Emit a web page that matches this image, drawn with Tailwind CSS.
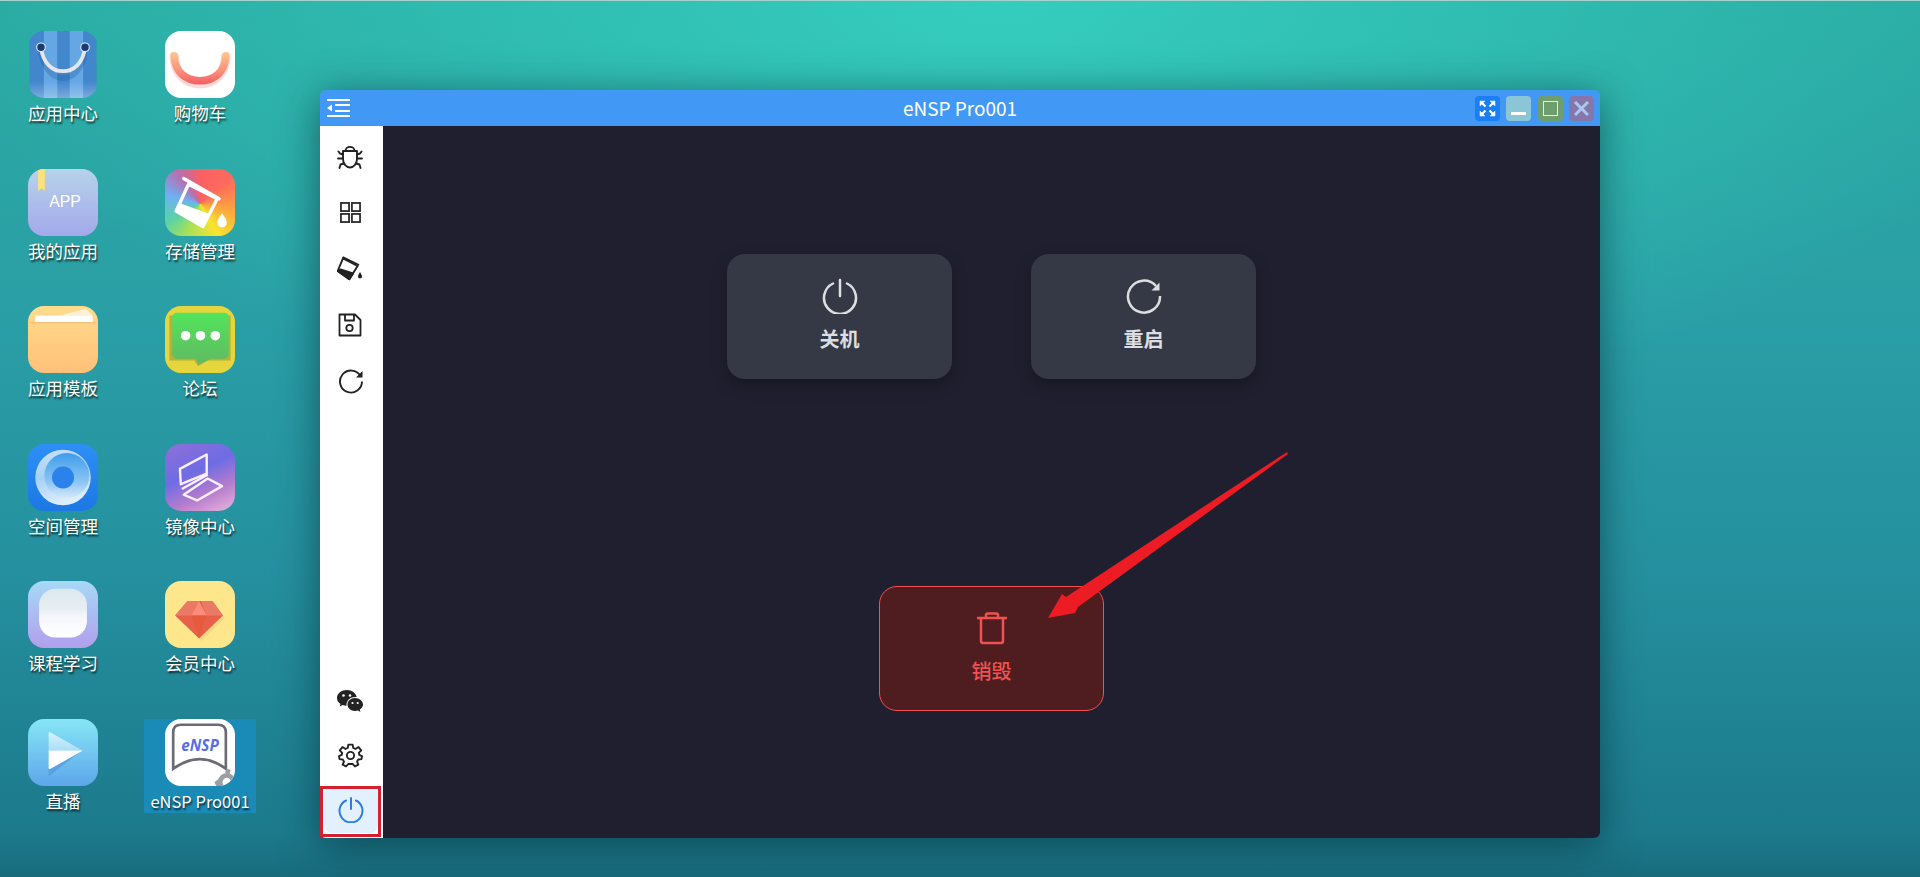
<!DOCTYPE html>
<html lang="zh-CN">
<head>
  <meta charset="UTF-8" />
  <meta name="viewport" content="width=device-width, initial-scale=1" />
  <title>eNSP Pro001</title>
  <script src="https://cdn.jsdelivr.net/npm/@tailwindcss/browser@4"></script>
</head>
<body class="font-['Noto_Sans_CJK_SC','Noto_Sans',sans-serif]">
  <div class="relative w-[1920px] h-[877px] overflow-hidden border-t border-[#a5d3cc] bg-[radial-gradient(ellipse_1050px_440px_at_52%_0%,#35cdbe_0%,rgba(53,205,190,0)_100%),linear-gradient(180deg,#2aaba2_0%,#2a9fa6_35%,#25909f_65%,#1c7a8c_95%,#186c7c_100%)]">

    <!-- desktop icons -->
    <div class="grid grid-cols-[112px_112px] gap-x-[25px] gap-y-[43.5px] pt-[30px] pl-[7px] w-fit text-white text-[17.5px] leading-[24px] [text-shadow:1px_2px_2px_rgba(0,0,0,.75)]">

      <div class="flex flex-col items-center h-[94px]">
        <div class="w-[70px] h-[70px] rounded-[16px] overflow-hidden">
          <svg viewBox="0 0 70 70" class="w-full h-full">
            <defs><linearGradient id="fadeA" x1="0" y1="0" x2="0" y2="1"><stop offset=".75" stop-color="#fff" stop-opacity="0"/><stop offset="1" stop-color="#fff" stop-opacity=".3"/></linearGradient></defs>
            <rect width="70" height="70" fill="#4286cc"/>
            <rect x="15" width="14" height="70" fill="#64a7e4"/><rect x="42" width="14" height="70" fill="#64a7e4"/>
            <rect width="70" height="70" fill="url(#fadeA)"/>
            <path d="M12 22C15 40 25 49 35 49S55 40 58 22" fill="none" stroke="#1f5c9e" stroke-opacity=".3" stroke-width="6"/>
            <path d="M12 17C14 34 24 42 35 42S56 34 58 17" fill="none" stroke="#e6e6ea" stroke-width="4"/>
            <circle cx="12" cy="17" r="4.500" fill="#1b3a72" stroke="#dfe8f2" stroke-width="1.200"/><circle cx="58" cy="17" r="4.500" fill="#1b3a72" stroke="#dfe8f2" stroke-width="1.200"/>
          </svg>
        </div>
        <span class="mt-[3px]">应用中心</span>
      </div>

      <div class="flex flex-col items-center h-[94px]">
        <div class="w-[70px] h-[70px] rounded-[16px] overflow-hidden bg-white">
          <svg viewBox="0 0 70 70" class="w-full h-full">
            <defs><linearGradient id="smile" gradientUnits="userSpaceOnUse" x1="0" y1="22" x2="0" y2="58"><stop offset="0" stop-color="#fdc88f"/><stop offset=".6" stop-color="#f98a78"/><stop offset="1" stop-color="#f4555f"/></linearGradient></defs>
            <path d="M8 27C9 45 20 55 35 55S61 45 62 27" fill="none" stroke="#f9b6b4" stroke-opacity=".5" stroke-width="10" stroke-linecap="round"/>
            <path d="M8 26C9 43 20 52 35 52S61 43 62 26" fill="none" stroke="url(#smile)" stroke-width="8" stroke-linecap="round"/>
          </svg>
        </div>
        <span class="mt-[3px]">购物车</span>
      </div>

      <div class="flex flex-col items-center h-[94px]">
        <div class="w-[70px] h-[70px] rounded-[16px] overflow-hidden bg-[linear-gradient(180deg,#b7d3ea,#a3a9ea)]">
          <svg viewBox="0 0 70 70" class="w-full h-full">
            <path d="M9 0H16V23L12.500 20L9 23Z" fill="#fde27a"/>
            <text x="37" y="40" text-anchor="middle" fill="#fff" font-size="16.500" style="font-family:'Liberation Sans',sans-serif;text-shadow:none">APP</text>
          </svg>
        </div>
        <span class="mt-[3px]">我的应用</span>
      </div>

      <div class="flex flex-col items-center h-[94px]">
        <div class="w-[70px] h-[70px] rounded-[16px] overflow-hidden bg-[conic-gradient(from_0deg_at_50%_52%,#fb5f64_0deg,#fd6a5c_50deg,#fda33f_100deg,#f7e42f_150deg,#a7e05a_205deg,#5cd2a5_240deg,#6eb0f4_285deg,#b66fb0_325deg,#fb5f64_360deg)]">
          <svg viewBox="0 0 70 70" class="w-full h-full">
            <path d="M18 10L55 31" stroke="#fff" stroke-width="3.500" stroke-linecap="round"/>
            <path d="M23 16L53 31L38 60L10 44Z" fill="none" stroke="#fff" stroke-width="3.500" stroke-linejoin="round"/>
            <path d="M15 36L45 47L38 60L10 44Z" fill="#fff"/>
            <path d="M58 46C61 51 63 53 63 56A5 5 0 0 1 53 56C53 53 55 51 58 46Z" fill="#fff"/>
          </svg>
        </div>
        <span class="mt-[3px]">存储管理</span>
      </div>

      <div class="flex flex-col items-center h-[94px]">
        <div class="w-[70px] h-[70px] rounded-[16px] overflow-hidden bg-[linear-gradient(180deg,#ffdc8c,#ffc07a)]">
          <svg viewBox="0 0 70 70" class="w-full h-full">
            <path d="M32 10L59 3L66 10Z" fill="#fdf1d8"/>
            <rect x="6" y="10" width="60" height="7" fill="#fff"/>
            <rect y="17" width="70" height="1" fill="#eeb868"/>
          </svg>
        </div>
        <span class="mt-[3px]">应用模板</span>
      </div>

      <div class="flex flex-col items-center h-[94px]">
        <div class="w-[70px] h-[70px] rounded-[16px] overflow-hidden bg-[#e4d63c]">
          <svg viewBox="0 0 70 70" class="w-full h-full">
            <defs><linearGradient id="chat" x1="0" y1="0" x2="0" y2="1"><stop offset="0" stop-color="#52e55c"/><stop offset="1" stop-color="#60ba62"/></linearGradient></defs>
            <path d="M3 10V57H29L33 63L43 57H67V10Z" fill="#a9a73a" opacity=".8"/>
            <path d="M6 12Q6 7 11 7H60Q65 7 65 12V50Q65 55 60 55H47L33 61L31 55H11Q6 55 6 50Z" fill="url(#chat)"/>
            <circle cx="20" cy="31" r="5" fill="#fff"/><circle cx="35.500" cy="31" r="5" fill="#fff"/><circle cx="51" cy="31" r="5" fill="#fff"/>
          </svg>
        </div>
        <span class="mt-[3px]">论坛</span>
      </div>

      <div class="flex flex-col items-center h-[94px]">
        <div class="w-[70px] h-[70px] rounded-[16px] overflow-hidden bg-[linear-gradient(180deg,#2e8ff7,#1c78e2)]">
          <svg viewBox="0 0 70 70" class="w-full h-full">
            <defs>
              <linearGradient id="disc" x1="0" y1="0" x2=".3" y2="1"><stop offset="0" stop-color="#cfe3fa"/><stop offset=".5" stop-color="#a5d0f7"/><stop offset="1" stop-color="#dcedfb"/></linearGradient>
              <linearGradient id="swirl" x1="0" y1="0" x2="0" y2="1"><stop offset="0" stop-color="#3f9ceb"/><stop offset=".65" stop-color="#8cc6f5"/><stop offset="1" stop-color="#d6e9fa"/></linearGradient>
            </defs>
            <circle cx="35" cy="35" r="29" fill="url(#disc)"/>
            <circle cx="39" cy="33" r="23.500" fill="url(#swirl)"/>
            <circle cx="35" cy="35" r="11.500" fill="#2a82ea"/>
          </svg>
        </div>
        <span class="mt-[3px]">空间管理</span>
      </div>

      <div class="flex flex-col items-center h-[94px]">
        <div class="w-[70px] h-[70px] rounded-[16px] overflow-hidden bg-[linear-gradient(155deg,#8f6fd8_0%,#6e6ce4_42%,#b57ccc_70%,#d9a2d8_90%,#bfc0cc_100%)]">
          <svg viewBox="0 0 70 70" class="w-full h-full" fill="none" stroke="#fbeffb" stroke-width="2.500" stroke-linejoin="round">
            <path d="M14 26L42 11V31L15 42Z"/>
            <path d="M16 47L43 32"/>
            <path d="M18 53L43 36L58 44L32 59Z"/>
          </svg>
        </div>
        <span class="mt-[3px]">镜像中心</span>
      </div>

      <div class="flex flex-col items-center h-[94px]">
        <div class="w-[70px] h-[70px] rounded-[16px] overflow-hidden bg-[linear-gradient(180deg,#a6d9f6,#b19fec)]">
          <svg viewBox="0 0 70 70" class="w-full h-full">
            <defs><linearGradient id="slate" x1="0" y1="0" x2="0" y2="1"><stop offset="0" stop-color="#dce8ee"/><stop offset=".4" stop-color="#e6eef3"/><stop offset=".6" stop-color="#f6f7fd"/><stop offset="1" stop-color="#fff"/></linearGradient></defs>
            <rect x="10" y="8" width="50" height="51" rx="17" fill="url(#slate)"/>
          </svg>
        </div>
        <span class="mt-[3px]">课程学习</span>
      </div>

      <div class="flex flex-col items-center h-[94px]">
        <div class="w-[70px] h-[70px] rounded-[16px] overflow-hidden bg-[#fee68c]">
          <svg viewBox="0 0 70 70" class="w-full h-full">
            <path d="M24 24H50L61 39L36 63Z" fill="#e0c068" opacity=".35"/>
            <path d="M22 21H48L59 36L34 60L9 36Z" fill="#e8604a"/>
            <path d="M22 21L34 21L26 36H9Z" fill="#ea7a66"/><path d="M48 21L36 21L42 36H59Z" fill="#ea7a66"/>
            <path d="M34 21L42 36H26Z" fill="#fb8c78"/>
            <path d="M26 36H42L34 60Z" fill="#e65a3e"/>
          </svg>
        </div>
        <span class="mt-[3px]">会员中心</span>
      </div>

      <div class="flex flex-col items-center h-[94px]">
        <div class="w-[70px] h-[70px] rounded-[16px] overflow-hidden bg-[linear-gradient(180deg,#87e6f6,#5da6ea)]">
          <svg viewBox="0 0 70 70" class="w-full h-full">
            <defs><linearGradient id="playTop" x1="0" y1="0" x2="0" y2="1"><stop offset="0" stop-color="#d5f2fb"/><stop offset="1" stop-color="#a9def6"/></linearGradient></defs>
            <path d="M20 52L55 33L20 60Z" fill="#4a90dc" opacity=".5"/>
            <path d="M20 15Q20 13 22 14L54 32Q56 33 55 33H20Z" fill="url(#playTop)"/>
            <path d="M20 33H55Q56 33 54 34L22 52Q20 53 20 51Z" fill="#fff"/>
          </svg>
        </div>
        <span class="mt-[3px]">直播</span>
      </div>

      <div class="flex flex-col items-center h-[94px] bg-[#1a8ab6]">
        <div class="w-[70px] h-[70px] rounded-[16px] overflow-hidden bg-white">
          <svg viewBox="0 0 70 70" class="w-full h-full">
            <path d="M7 52V14Q7 6 15 6H54Q62 6 62 14V52Q35 32 7 52Z" fill="none" stroke="#6b6b75" stroke-width="2.800"/>
            <text x="35" y="33" text-anchor="middle" fill="#5a6ce2" font-size="16" font-weight="700" font-style="italic" style="font-family:'Open Sans',sans-serif;text-shadow:none">eNSP</text>
            <circle cx="63" cy="66" r="7" fill="none" stroke="#9a9fa6" stroke-width="5"/>
            <path d="M54 63L50 66L52 70H58ZM61 56L63 52L67 53L66 58Z" fill="#9a9fa6"/>
          </svg>
        </div>
        <span class="mt-[3px] text-[16.500px] whitespace-nowrap">eNSP Pro001</span>
      </div>
    </div>

    <!-- app window -->
    <div class="absolute left-[320px] top-[89px] w-[1280px] h-[748px] flex flex-col rounded-[6px] overflow-hidden shadow-[0_6px_40px_rgba(0,30,40,.55)]">
      <div class="relative h-[36px] shrink-0 flex items-center justify-between bg-[#4298f5] pl-[7px] pr-[6px]">
        <svg viewBox="0 0 23 18" class="w-[23px] h-[18px]" fill="#fff">
          <rect y="0" width="23" height="2"/><rect x="8" y="5" width="15" height="2"/><rect x="8" y="11" width="15" height="2"/><rect y="16" width="23" height="2"/>
          <path d="M0 9L5 5.500V12.500Z"/>
        </svg>
        <span class="absolute left-0 right-0 text-center text-white text-[19px]">eNSP Pro001</span>
        <div class="relative flex gap-[6.300px]">
          <div class="w-[25px] h-[25px] rounded-[4px] bg-[#1a7ff5] flex items-center justify-center">
            <svg viewBox="0 0 17 17" class="w-[17px] h-[17px]" fill="#fff" stroke="#fff">
              <path d="M1 1H6L1 6Z" stroke-width=".5"/><path d="M16 1H11L16 6Z" stroke-width=".5"/><path d="M1 16H6L1 11Z" stroke-width=".5"/><path d="M16 16H11L16 11Z" stroke-width=".5"/>
              <path d="M3 3L6.500 6.500M14 3L10.500 6.500M3 14L6.500 10.500M14 14L10.500 10.500" stroke-width="2" fill="none"/>
            </svg>
          </div>
          <div class="w-[25px] h-[25px] rounded-[4px] bg-[#8ac5d8] flex items-center justify-center">
            <div class="w-[15px] h-[3px] bg-white mt-[10px]"></div>
          </div>
          <div class="w-[25px] h-[25px] rounded-[4px] bg-[#6e9e6e] flex items-center justify-center">
            <div class="w-[15px] h-[15px] border-[1.500px] border-[#e4ecdf]"></div>
          </div>
          <div class="w-[25px] h-[25px] rounded-[4px] bg-[#8577ab] flex items-center justify-center">
            <svg viewBox="0 0 17 17" class="w-[17px] h-[17px]" fill="none" stroke="#a9c8ee" stroke-width="3"><path d="M2 2L15 15M15 2L2 15"/></svg>
          </div>
        </div>
      </div>

      <div class="flex flex-1 min-h-0">
        <!-- side toolbar -->
        <div class="w-[63px] shrink-0 bg-white flex flex-col justify-between pt-[3px] pb-[3px] pr-[3px] text-[#222]">
          <div class="flex flex-col">
            <div class="h-[56px] flex items-center justify-center">
              <svg viewBox="0 0 26 26" class="w-[26px] h-[26px] -mt-[2px]" fill="none" stroke="currentColor" stroke-width="1.900" stroke-linecap="round" stroke-linejoin="round">
                <path d="M8.500 8C8.500 2.500 17.500 2.500 17.500 8"/><path d="M6 8H20V16C20 21 16.500 24.500 13 24.500S6 21 6 16Z"/>
                <path d="M6 11.500L3 10.500L1.500 8.500M20 11.500L23 10.500L24.500 8.500M6 15.500H1M20 15.500H25M7 20.500L3.500 21.500L2.500 25M19 20.500L22.500 21.500L23.500 25"/>
              </svg>
            </div>
            <div class="h-[56px] flex items-center justify-center">
              <svg viewBox="0 0 22 22" class="w-[21px] h-[21px] -mt-[2px]" fill="none" stroke="currentColor" stroke-width="1.800">
                <rect x="1" y="1" width="8.500" height="8.500"/><rect x="12.500" y="1" width="8.500" height="8.500"/><rect x="1" y="12.500" width="8.500" height="8.500"/><rect x="12.500" y="12.500" width="8.500" height="8.500"/>
              </svg>
            </div>
            <div class="h-[56px] flex items-center justify-center">
              <svg viewBox="0 0 26 26" class="w-[26px] h-[26px] -mt-[3px]" fill="none" stroke="currentColor" stroke-width="1.900" stroke-linejoin="round">
                <path d="M5.700 2L22 10"/><path d="M6 3.300L20.600 11L12.300 24.300L.7 16Z"/>
                <path d="M3.500 14.500L16 18.500L12.300 24.300L.7 16Z" fill="currentColor"/>
                <path d="M23 17C24 19 25 20 25 21.500A2 2 0 0 1 21 21.500C21 20 22 19 23 17Z" fill="currentColor" stroke="none"/>
              </svg>
            </div>
            <div class="h-[56px] flex items-center justify-center">
              <svg viewBox="0 0 24 24" class="w-[24px] h-[24px]" fill="none" stroke="currentColor" stroke-width="1.800" stroke-linejoin="round">
                <path d="M1.500 1.500H17L22.500 7V22.500H1.500Z"/><path d="M7 1.500V7.500H16V1.500"/><circle cx="11.500" cy="15" r="3.200"/>
              </svg>
            </div>
            <div class="h-[56px] flex items-center justify-center">
              <svg viewBox="0 0 26 26" class="w-[26px] h-[26px] ml-[2px]" fill="none" stroke="currentColor" stroke-width="1.900">
                <path d="M22.500 8A11 11 0 1 0 24 13.500"/>
                <path d="M24.500 3V9.500H18Z" fill="currentColor" stroke="none"/>
              </svg>
            </div>
          </div>
          <div class="flex flex-col">
            <div class="h-[55px] flex items-center justify-center">
              <svg viewBox="0 0 26 22" class="w-[26px] h-[22px]" fill="currentColor">
                <path d="M10 0C4.500 0 0 3.500 0 8C0 10.500 1.300 12.500 3.500 14L2.700 16.500L5.700 15C7 15.500 8.300 15.700 9.500 15.700C9 10 14 6.500 19.700 7C18.800 3 14.800 0 10 0Z"/>
                <path d="M18 8C13.500 8 10.500 11 10.500 14.500S13.500 21 18 21C19 21 20 20.700 21 20.500L23.500 22L22.800 19.500C24.700 18.300 26 16.500 26 14.500C26 11 22.500 8 18 8Z"/>
                <circle cx="6.500" cy="5.500" r="1.300" fill="#fff"/><circle cx="13" cy="5.500" r="1.300" fill="#fff"/>
                <circle cx="15.500" cy="13" r="1.100" fill="#fff"/><circle cx="20.700" cy="13" r="1.100" fill="#fff"/>
              </svg>
            </div>
            <div class="h-[55px] flex items-center justify-center">
              <svg viewBox="0 0 24 24" class="w-[25px] h-[25px]" fill="none" stroke="currentColor" stroke-width="1.800" stroke-linejoin="round">
                <circle cx="12" cy="12" r="3.500"/>
                <path d="M10 1.500H14L14.700 4.800L16.800 5.700L19.700 3.900L22.300 7.100L20 9.500L20.500 11.500L23 12.500V13L22.500 15.500L19.500 15.800L18.300 17.800L19.500 20.800L16.300 22.500L14.200 20.200H9.800L7.700 22.500L4.500 20.800L5.700 17.800L4.500 15.800L1.500 15.500L1 13V12.500L3.500 11.500L4 9.500L1.700 7.100L4.300 3.900L7.200 5.700L9.300 4.800Z"/>
              </svg>
            </div>
            <div class="h-[46px] mt-[4px] ml-[4px] mr-[2px] mb-[2px] rounded-[8px] bg-[#e3f1ff] flex items-center justify-center text-[#2b7fe0]">
              <svg viewBox="0 0 26 26" class="w-[26px] h-[26px]" fill="none" stroke="currentColor" stroke-width="2" stroke-linecap="round">
                <path d="M8 3.500A11.500 11.500 0 1 0 18 3.500"/><path d="M13 1V12"/>
              </svg>
            </div>
          </div>
        </div>

        <!-- power panel -->
        <div class="flex-1 bg-[#1f1f2f] flex flex-col items-center justify-center gap-[207px] font-bold text-[20px] leading-[26px]">
          <div class="flex gap-[79px] text-[#dcdee2]">
            <div class="w-[225px] h-[125px] rounded-[18px] bg-[#353945] shadow-[0_6px_16px_rgba(0,0,0,.25)] flex flex-col items-center pt-[24px] gap-[12px]">
              <svg viewBox="0 0 36 36" class="w-[36px] h-[36px]" fill="none" stroke="currentColor" stroke-width="2.500" stroke-linecap="round">
                <path d="M11 5.500A16 16 0 1 0 25 5.500"/><path d="M18 2V18"/>
              </svg>
              <span>关机</span>
            </div>
            <div class="w-[225px] h-[125px] rounded-[18px] bg-[#353945] shadow-[0_6px_16px_rgba(0,0,0,.25)] flex flex-col items-center pt-[24px] gap-[12px]">
              <svg viewBox="0 0 36 36" class="w-[36px] h-[36px]" fill="none" stroke="currentColor" stroke-width="2.500">
                <path d="M30 8A16 16 0 1 0 34 18"/>
                <path d="M33.500 4.500V12.500H25.500Z" fill="currentColor" stroke="none"/>
              </svg>
              <span>重启</span>
            </div>
          </div>
          <div class="w-[225px] h-[125px] rounded-[18px] border border-[#f05252] bg-[#4f1d1f] text-[#f05252] flex flex-col items-center pt-[23px] gap-[12px] font-medium">
            <svg viewBox="0 0 36 36" class="w-[36px] h-[36px]" fill="none" stroke="currentColor" stroke-width="2.500" stroke-linejoin="round">
              <path d="M3 8H33"/><path d="M12 8V5Q12 3.500 14 3.500H22Q24 3.500 24 5V8"/><path d="M7 8V31Q7 33 9 33H27Q29 33 29 31V8"/>
            </svg>
            <span>销毁</span>
          </div>
        </div>
      </div>
    </div>

    <!-- annotations -->
    <div class="absolute left-[320px] top-[785px] w-[61px] h-[51px] border-[3px] border-[#d4202f]"></div>
    <svg class="absolute left-[1040px] top-[444px] w-[256px] h-[180px]" viewBox="1040 445 256 180">
      <path d="M1287 452L1066 597L1062 594L1048 618L1075 613L1078 607L1288 454Z" fill="#ed1c24"/>
    </svg>
  </div>
</body>
</html>
